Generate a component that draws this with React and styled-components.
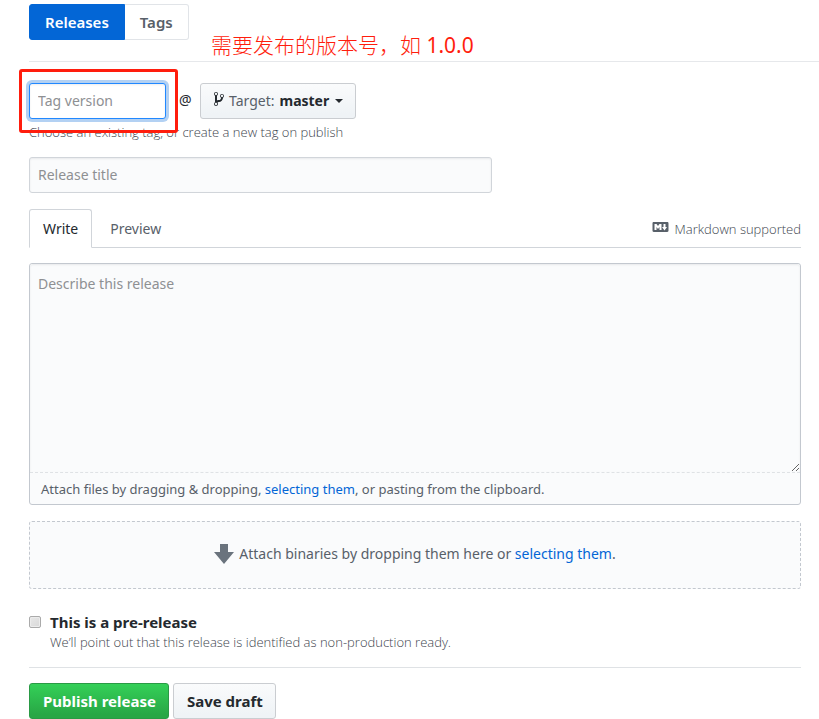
import React from "react";
import styled, { createGlobalStyle, css } from "styled-components";

const GlobalStyle = createGlobalStyle`
  *, *::before, *::after { box-sizing: border-box; }
  body {
    margin: 0;
    background: #fff;
    color: #24292e;
    font: 14px/20px "Noto Sans", "Noto Sans CJK SC", sans-serif;
  }
  button, input, textarea { font: inherit; color: inherit; margin: 0; }
  a { color: #0366d6; text-decoration: none; }
`;

const Page = styled.main`
  position: relative;
  padding: 4px 18px 0 29px;
`;

const Header = styled.header`
  display: flex;
  margin-right: -18px;
  padding-bottom: 21px;
  border-bottom: 1px solid #e6e8eb;
`;

const SubnavLink = styled.a`
  height: 36px;
  padding: 7px 15px;
  font-size: 15px;
  font-weight: 600;
  color: ${(p) => (p.$selected ? "#fff" : "#586069")};
  background: ${(p) => (p.$selected ? "#0366d6" : "#fff")};
  border: 1px solid ${(p) => (p.$selected ? "#0366d6" : "#e1e4e8")};
  border-radius: ${(p) => (p.$selected ? "3px 0 0 3px" : "0 3px 3px 0")};
  border-left-width: ${(p) => (p.$selected ? "1px" : "0")};
`;

const annotationRed = "#ff1d0d";

const Annotation = styled.p`
  position: absolute;
  top: 30px;
  left: 211px;
  margin: 0;
  font-size: 21px;
  font-weight: 300;
  line-height: 30px;
  color: ${annotationRed};
`;

const VersionExample = styled.span`
  font-weight: 400;
`;

const TagRow = styled.div`
  display: flex;
  align-items: center;
  padding-top: 21px;
`;

const field = css`
  height: 36px;
  padding: 0 8px 2px;
  border: 1px solid #d1d5da;
  border-radius: 3px;
  outline: none;
  background: #fafbfc;
  box-shadow: inset 0 1px 2px rgba(27, 31, 35, 0.075);
  &::placeholder { color: #8e9093; opacity: 1; }
`;

const TagField = styled.div`
  position: relative;
  width: 137px;
  &::after {
    content: "";
    position: absolute;
    inset: -14px -12px -14px -10px;
    border: 3px solid ${annotationRed};
    border-radius: 3px;
    pointer-events: none;
    z-index: 1;
  }
`;

const TagInput = styled.input`
  ${field}
  display: block;
  width: 100%;
  background: #fff;
  border-color: #2188ff;
  box-shadow: inset 0 1px 2px rgba(27, 31, 35, 0.075), 0 0 0 3px rgba(3, 102, 214, 0.3);
`;

const At = styled.span`
  width: 34px;
  padding: 0 0 2px 13px;
`;

const Button = styled.button`
  display: flex;
  align-items: center;
  height: 36px;
  padding: 0 12px 0 13px;
  white-space: nowrap;
  font-size: ${(p) => (p.$menu ? "14px" : "15px")};
  font-weight: 700;
  cursor: pointer;
  border: 1px solid ${(p) => (p.$primary ? "#2a9a45" : "#cacdd1")};
  border-radius: 3px;
  color: ${(p) => (p.$primary ? "#fff" : "#24292e")};
  background: ${(p) =>
    p.$primary
      ? "linear-gradient(180deg, #34d058, #28a745 90%)"
      : "linear-gradient(180deg, #fafbfc, #eff3f6 90%)"};
`;

const TargetLabel = styled.span`
  margin: 0 5px;
  font-weight: 400;
  color: #586069;
`;

const Caret = styled.span`
  margin-left: 6px;
  border: 4px solid transparent;
  border-top-color: currentColor;
  border-bottom-width: 0;
`;

const smallText = css`
  font-family: "Open Sans", sans-serif;
  font-size: 13px;
  font-weight: 300;
  color: #3c444d;
`;

const Hint = styled.p`
  ${smallText}
  margin: 0;
  padding: 3px 0 15px;
`;

const TitleInput = styled.input`
  ${field}
  display: block;
  width: 60%;
`;

const TabBar = styled.div`
  display: flex;
  justify-content: space-between;
  margin-top: 16px;
  border-bottom: 1px solid #d1d5da;
`;

const Tabs = styled.div`
  display: flex;
  margin-bottom: -1px;
`;

const Tab = styled.button`
  height: 39px;
  padding: 0 13px;
  margin-right: 4px;
  cursor: pointer;
  color: ${(p) => (p["aria-selected"] ? "#24292e" : "#586069")};
  background: ${(p) => (p["aria-selected"] ? "#fff" : "transparent")};
  border: 1px solid ${(p) => (p["aria-selected"] ? "#d1d5da" : "transparent")};
  border-bottom-color: ${(p) => (p["aria-selected"] ? "#fff" : "transparent")};
  border-radius: 3px 3px 0 0;
`;

const MarkdownLink = styled.a`
  ${smallText}
  display: flex;
  align-items: center;
  gap: 6px;
  padding-top: 2px;
`;

const Editor = styled.div`
  margin-top: 15px;
  border: 1px solid #c3c8cf;
  border-radius: 3px;
  background: #fafbfc;
`;

const Description = styled.textarea`
  ${field}
  display: block;
  width: 100%;
  height: 209px;
  padding: 10px 8px;
  border: 0;
  border-bottom: 1px dashed #dfe2e5;
  border-radius: 3px 3px 0 0;
  resize: vertical;
`;

const AttachNote = styled.p`
  margin: 0;
  padding: 6px 11px 5px;
  font-size: 13px;
  color: #586069;
`;

const DropZone = styled.div`
  display: flex;
  align-items: center;
  justify-content: center;
  gap: 5px;
  height: 68px;
  margin-top: 16px;
  padding-bottom: 2px;
  border: 1px dashed #c3c8cf;
  border-radius: 3px;
  background: #fafbfc;
  color: #586069;
`;

const PreRelease = styled.div`
  display: grid;
  grid-template-columns: 13px 1fr;
  column-gap: 8px;
  align-items: center;
  padding: 23px 0 15px;
  border-bottom: 1px solid #dfe2e5;
`;

const Checkbox = styled.input`
  appearance: none;
  width: 12px;
  height: 12px;
  border: 1px solid #aaa;
  border-radius: 2px;
  background: linear-gradient(135deg, #e8e8e8, #d8d8d8);
  box-shadow: inset 0 0 0 1px #ececec;
  &:checked { background: #0366d6; }
`;

const PreLabel = styled.label`
  font-size: 15px;
  font-weight: 700;
`;

const PreNote = styled.p`
  ${smallText}
  grid-column: 2;
  margin: 0;
`;

const Actions = styled.div`
  display: flex;
  gap: 4px;
  padding-top: 15px;
`;

const Icon = styled.svg`
  display: block;
  flex: none;
  fill: currentColor;
`;

const BranchIcon = () => (
  <Icon width="10" height="20" viewBox="0 0 10 20" aria-hidden="true">
    <path d="M10 5c0-1.11-.89-2-2-2a1.993 1.993 0 0 0-1 3.72v.3c-.02.52-.23.98-.63 1.38-.4.4-.86.61-1.38.63-.83.02-1.48.16-2 .45V4.72a1.993 1.993 0 0 0-1-3.72C.88 1 0 1.89 0 3a2 2 0 0 0 1 1.72v6.56c-.59.35-1 .99-1 1.72 0 1.11.89 2 2 2 1.11 0 2-.89 2-2 0-.53-.2-1-.53-1.36.09-.06.48-.41.59-.47.25-.11.56-.17.94-.17 1.05-.05 1.95-.45 2.75-1.25S8.95 7.77 9 6.73h-.02C9.59 6.37 10 5.73 10 5zM2 1.8c.66 0 1.2.55 1.2 1.2 0 .65-.55 1.2-1.2 1.2C1.35 4.2.8 3.65.8 3c0-.65.55-1.2 1.2-1.2zm0 12.41c-.66 0-1.2-.55-1.2-1.2 0-.65.55-1.2 1.2-1.2.65 0 1.2.55 1.2 1.2 0 .65-.55 1.2-1.2 1.2zm6-8c-.66 0-1.2-.55-1.2-1.2 0-.65.55-1.2 1.2-1.2.65 0 1.2.55 1.2 1.2 0 .65-.55 1.2-1.2 1.2z" />
  </Icon>
);

const MarkdownIcon = () => (
  <Icon width="17" height="20" viewBox="0 0 16 20" aria-hidden="true">
    <path
      fill="#586069"
      fillRule="evenodd"
      d="M14.85 3H1.15C.52 3 0 3.52 0 4.15v7.69C0 12.48.52 13 1.15 13h13.69c.64 0 1.15-.52 1.15-1.15v-7.7C16 3.52 15.48 3 14.85 3zM9 11H7V8L5.5 9.92 4 8v3H2V5h2l1.5 2L7 5h2v6zm2.99.5L9.5 8H11V5h2v3h1.5l-2.51 3.5z"
    />
  </Icon>
);

const ArrowDownIcon = () => (
  <Icon width="20" height="32" viewBox="0 0 10 16" aria-hidden="true">
    <path fill="#6a737d" d="M7 7V3H3v4H0l5 6 5-6H7z" />
  </Icon>
);

export default function App() {
  return (
    <>
      <GlobalStyle />
      <Page>
        <Header as="nav" aria-label="Releases and tags">
          <SubnavLink href="#releases" $selected>Releases</SubnavLink>
          <SubnavLink href="#tags">Tags</SubnavLink>
        </Header>
        <Annotation lang="zh">
          需要发布的版本号，如 <VersionExample>1.0.0</VersionExample>
        </Annotation>

        <form onSubmit={(e) => e.preventDefault()}>
          <TagRow>
            <TagField>
              <TagInput aria-label="Tag version" placeholder="Tag version" />
            </TagField>
            <At>@</At>
            <Button type="button" aria-haspopup="menu" $menu>
              <BranchIcon />
              <TargetLabel>Target:</TargetLabel>
              master
              <Caret />
            </Button>
          </TagRow>
          <Hint>Choose an existing tag, or create a new tag on publish</Hint>

          <TitleInput aria-label="Release title" placeholder="Release title" />

          <TabBar>
            <Tabs role="tablist">
              <Tab type="button" role="tab" aria-selected={true}>Write</Tab>
              <Tab type="button" role="tab" aria-selected={false}>Preview</Tab>
            </Tabs>
            <MarkdownLink href="#markdown">
              <MarkdownIcon />
              Markdown supported
            </MarkdownLink>
          </TabBar>

          <Editor>
            <Description aria-label="Describe this release" placeholder="Describe this release" />
            <AttachNote>
              Attach files by dragging &amp; dropping, <a href="#files">selecting them</a>, or pasting from the clipboard.
            </AttachNote>
          </Editor>

          <DropZone>
            <ArrowDownIcon />
            <span>
              Attach binaries by dropping them here or <a href="#binaries">selecting them</a>.
            </span>
          </DropZone>

          <PreRelease>
            <Checkbox type="checkbox" id="prerelease" />
            <PreLabel htmlFor="prerelease">This is a pre-release</PreLabel>
            <PreNote>We’ll point out that this release is identified as non-production ready.</PreNote>
          </PreRelease>

          <Actions>
            <Button type="submit" $primary>Publish release</Button>
            <Button type="button">Save draft</Button>
          </Actions>
        </form>
      </Page>
    </>
  );
}
